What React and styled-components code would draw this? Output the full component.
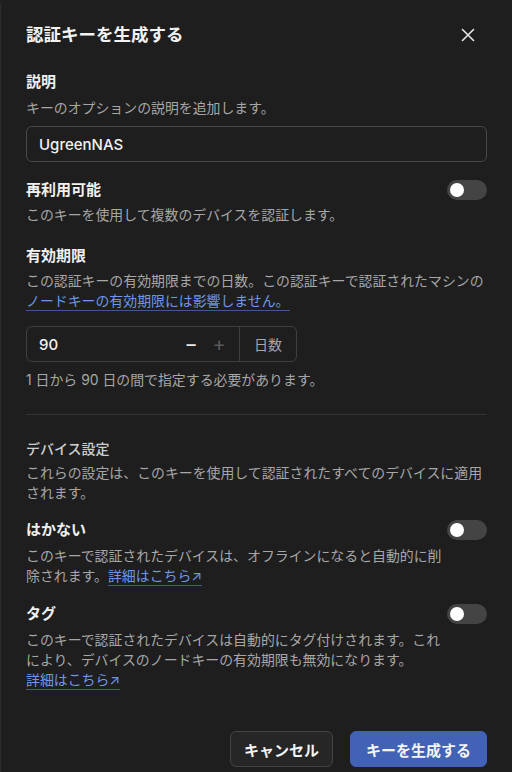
import styled, { createGlobalStyle } from "styled-components";

const GlobalStyle = createGlobalStyle`
  html, body {
    margin: 0;
    padding: 0;
    background: #1e1e1e;
  }
  body {
    font-family: Inter, "Noto Sans CJK JP", sans-serif;
    color: #ededed;
  }
`;

const Toggle = ({ on }) => (
  <Switch $on={on}>
    <Knob $on={on} />
  </Switch>
);

const App = () => {
  return (
    <>
      <GlobalStyle />
      <Panel>
        <Header>
          <Title>認証キーを生成する</Title>
          <CloseButton aria-label="閉じる">
            <svg width="14" height="14" viewBox="0 0 14 14">
              <path
                d="M1.5 1.5l11 11M12.5 1.5l-11 11"
                stroke="#e6e6e6"
                strokeWidth="1.6"
                strokeLinecap="round"
              />
            </svg>
          </CloseButton>
        </Header>

        <Section $after="16px">
          <Label>説明</Label>
          <Desc $top="4px">キーのオプションの説明を追加します。</Desc>
          <TextInput defaultValue="UgreenNAS" />
        </Section>

        <Section $after="19px">
          <Row>
            <Label>再利用可能</Label>
            <Toggle />
          </Row>
          <Desc $top="3px">このキーを使用して複数のデバイスを認証します。</Desc>
        </Section>

        <Section>
          <Label>有効期限</Label>
          <Desc $top="3px">
            この認証キーの有効期限までの日数。この認証キーで認証されたマシンの
            <br />
            <Link>ノードキーの有効期限には影響しません。</Link>
          </Desc>
          <NumberGroup>
            <NumberField>
              <NumberValue>90</NumberValue>
              <Stepper>−</Stepper>
              <Stepper $dim>+</Stepper>
            </NumberField>
            <Unit>日数</Unit>
          </NumberGroup>
          <Desc $top="8px">1 日から 90 日の間で指定する必要があります。</Desc>
        </Section>

        <Divider />

        <Section $after="15px">
          <SubHeading>デバイス設定</SubHeading>
          <Desc $top="3px">
            これらの設定は、このキーを使用して認証されたすべてのデバイスに適用されます。
          </Desc>
        </Section>

        <Section $after="16px">
          <Row>
            <Label>はかない</Label>
            <Toggle />
          </Row>
          <Desc $top="4px" $narrow>
            このキーで認証されたデバイスは、オフラインになると自動的に削除されます。
            <Link>詳細はこちら↗</Link>
          </Desc>
        </Section>

        <Section>
          <Row>
            <Label>タグ</Label>
            <Toggle />
          </Row>
          <Desc $top="4px" $narrow>
            このキーで認証されたデバイスは自動的にタグ付けされます。これにより、デバイスのノードキーの有効期限も無効になります。
            <br />
            <Link>詳細はこちら↗</Link>
          </Desc>
        </Section>

        <Footer>
          <Button>キャンセル</Button>
          <Button $primary>キーを生成する</Button>
        </Footer>
      </Panel>
    </>
  );
};

const Panel = styled.div`
  box-sizing: border-box;
  width: 512px;
  min-height: 772px;
  padding: 22px 25px 6px;
  background: #1e1e1e;
  border-left: 1px solid #2c2c2c;
  border-top-left-radius: 6px;
`;

const Header = styled.div`
  display: flex;
  align-items: center;
  justify-content: space-between;
  margin-bottom: 22px;
`;

const Title = styled.h1`
  margin: 0;
  font-size: 17.5px;
  font-weight: 700;
  line-height: 26px;
  color: #f2f2f2;
`;

const CloseButton = styled.button`
  display: flex;
  align-items: center;
  justify-content: center;
  width: 26px;
  height: 26px;
  margin-right: 6px;
  padding: 0;
  background: transparent;
  border: 0;
`;

const Section = styled.div`
  display: flex;
  flex-direction: column;
  margin-bottom: ${(p) => p.$after || "0"};
`;

const Row = styled.div`
  display: flex;
  align-items: center;
  justify-content: space-between;
  height: 24px;
`;

const Label = styled.div`
  font-size: 15px;
  font-weight: 700;
  line-height: 24px;
  color: #f0f0f0;
`;

const SubHeading = styled.div`
  font-size: 14px;
  font-weight: 500;
  line-height: 22px;
  color: #cfcfcf;
`;

const Desc = styled.p`
  margin: ${(p) => p.$top || "0"} 0 0;
  max-width: ${(p) => (p.$narrow ? "424px" : "none")};
  font-size: 13.9px;
  line-height: 20px;
  color: #a7a7a7;
`;

const Link = styled.a`
  color: #6f97e6;
  text-decoration: none;
  border-bottom: 1px solid #3f5a8c;
  padding-bottom: 1px;
  cursor: pointer;
`;

const TextInput = styled.input`
  box-sizing: border-box;
  width: 100%;
  height: 36px;
  margin-top: 8px;
  padding: 0 12px;
  background: transparent;
  border: 1px solid #474747;
  border-radius: 6px;
  font-family: inherit;
  font-size: 15px;
  font-weight: 500;
  color: #f2f2f2;
  outline: none;
`;

const NumberGroup = styled.div`
  display: flex;
  width: 271px;
  height: 36px;
  margin-top: 15px;
  border: 1px solid #3f3f3f;
  border-radius: 6px;
  box-sizing: border-box;
`;

const NumberField = styled.div`
  display: flex;
  align-items: center;
  flex: 1;
  padding: 0 6px 0 12px;
  border-right: 1px solid #3f3f3f;
`;

const NumberValue = styled.span`
  flex: 1;
  font-size: 15px;
  font-weight: 500;
  color: #f2f2f2;
`;

const Stepper = styled.span`
  width: 28px;
  text-align: center;
  font-size: 20px;
  font-weight: 400;
  line-height: 1;
  color: ${(p) => (p.$dim ? "#5a5a5a" : "#e8e8e8")};
`;

const Unit = styled.div`
  display: flex;
  align-items: center;
  padding: 0 14px;
  font-size: 14px;
  color: #a7a7a7;
`;

const Divider = styled.hr`
  margin: 24px 0 23px;
  border: 0;
  border-top: 1px solid #333;
`;

const Switch = styled.div`
  position: relative;
  width: 40px;
  height: 20px;
  border-radius: 10px;
  background: ${(p) => (p.$on ? "#4a6fc4" : "#444")};
  flex-shrink: 0;
`;

const Knob = styled.div`
  position: absolute;
  top: 3px;
  left: ${(p) => (p.$on ? "23px" : "3px")};
  width: 14px;
  height: 14px;
  border-radius: 50%;
  background: #fff;
`;

const Footer = styled.div`
  display: flex;
  justify-content: flex-end;
  gap: 17px;
  margin-top: 41px;
`;

const Button = styled.button`
  height: 36px;
  padding: 0 ${(p) => (p.$primary ? "15px" : "13px")};
  border-radius: 6px;
  border: 1px solid ${(p) => (p.$primary ? "#4262b5" : "#444")};
  background: ${(p) => (p.$primary ? "#4262b5" : "#262626")};
  color: #f4f4f4;
  font-family: inherit;
  font-size: 15px;
  font-weight: 700;
`;

export default App;
